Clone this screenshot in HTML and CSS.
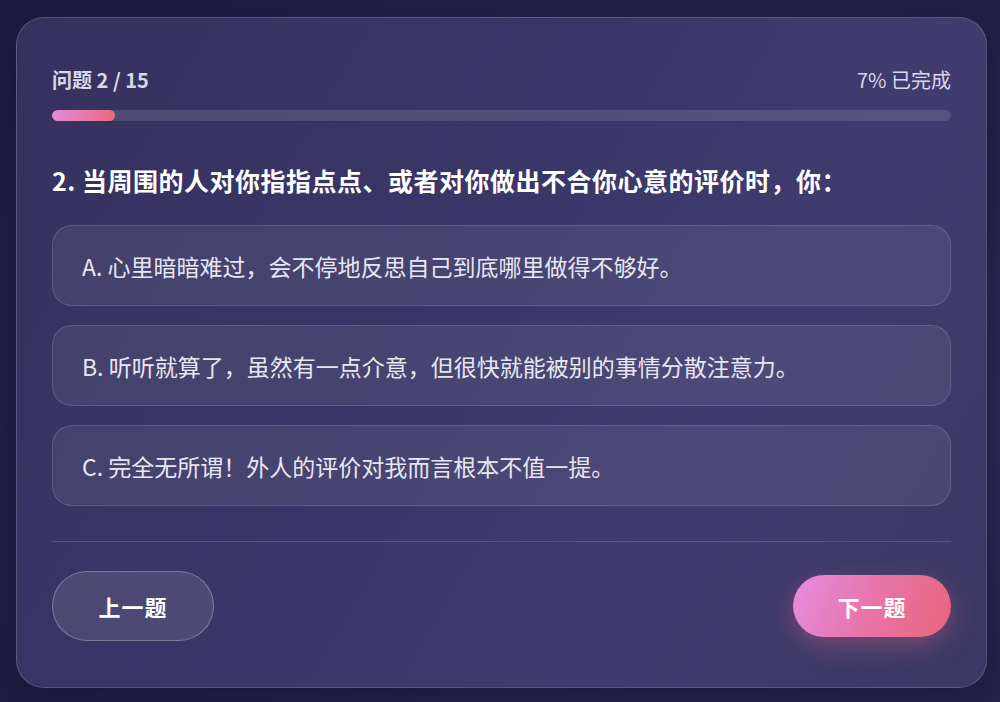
FILE: index.html
```html
<!DOCTYPE html>
<html lang="zh">
<head>
<meta charset="utf-8">
<link rel="stylesheet" href="styles.css">
</head>
<body>
<div class="card">
  <div class="meta">
    <span class="count">问题 2 / 15</span>
    <span class="pct">7% 已完成</span>
  </div>
  <div class="track"><div class="fill" style="width:7%"></div></div>
  <h2 class="question">2. 当周围的人对你指指点点、或者对你做出不合你心意的评价时，你：</h2>
  <div class="options">
    <div class="option">A. 心里暗暗难过，会不停地反思自己到底哪里做得不够好。</div>
    <div class="option">B. 听听就算了，虽然有一点介意，但很快就能被别的事情分散注意力。</div>
    <div class="option">C. 完全无所谓！外人的评价对我而言根本不值一提。</div>
  </div>
  <div class="divider"></div>
  <div class="nav">
    <button class="btn prev">上一题</button>
    <button class="btn next">下一题</button>
  </div>
</div>
</body>
</html>
```
FILE: styles.css
```css
* { box-sizing: border-box; }
html, body { margin: 0; height: 100%; }
body {
  font-family: "Noto Sans CJK SC", "Noto Sans", sans-serif;
  background: radial-gradient(ellipse at 70% 60%, #332f62 0%, #27244e 55%, #1e1b42 100%);
  padding: 17px 13px 14px 16px;
}
.card {
  width: 971px;
  height: 671px;
  border-radius: 28px;
  border: 1px solid rgba(255,255,255,0.16);
  background: linear-gradient(120deg, #36315e 0%, #3a3667 45%, #403c6e 70%, #3c3863 100%);
  box-shadow: 0 10px 40px rgba(10,8,30,0.45);
  padding: 46px 35px 0 35px;
  display: flex;
  flex-direction: column;
}
.meta {
  display: flex;
  justify-content: space-between;
  align-items: center;
  height: 30px;
  color: #d9d7ea;
  font-size: 20px;
}
.count { font-weight: 700; }
.pct { font-weight: 400; }
.track {
  margin-top: 16px;
  height: 11px;
  border-radius: 6px;
  background: rgba(255,255,255,0.12);
  overflow: hidden;
}
.fill {
  height: 100%;
  border-radius: 6px;
  background: linear-gradient(90deg, #e48bd9, #ea6a7c);
}
.question {
  margin: 42px 0 0 0;
  font-size: 25px;
  font-weight: 700;
  color: #ffffff;
  line-height: 34px;
  letter-spacing: 0.5px;
}
.options {
  margin-top: 28px;
  display: flex;
  flex-direction: column;
  gap: 19px;
}
.option {
  height: 81px;
  display: flex;
  align-items: center;
  padding-left: 29px;
  border-radius: 20px;
  border: 1px solid rgba(255,255,255,0.14);
  background: rgba(255,255,255,0.07);
  color: #e8e6f2;
  font-size: 23px;
}
.divider {
  margin-top: 35px;
  height: 1px;
  background: rgba(255,255,255,0.14);
}
.nav {
  margin-top: 29px;
  display: flex;
  justify-content: space-between;
  align-items: center;
}
.btn {
  font-family: inherit;
  font-size: 22px;
  font-weight: 700;
  color: #ffffff;
  border-radius: 40px;
  cursor: pointer;
  letter-spacing: 1px;
}
.prev {
  width: 162px;
  height: 70px;
  background: rgba(255,255,255,0.1);
  border: 1px solid rgba(255,255,255,0.28);
}
.next {
  width: 158px;
  height: 62px;
  border: none;
  background: linear-gradient(110deg, #e58de0 0%, #e874a8 50%, #e8657a 100%);
  box-shadow: 0 8px 24px rgba(232,100,140,0.35);
}
```
